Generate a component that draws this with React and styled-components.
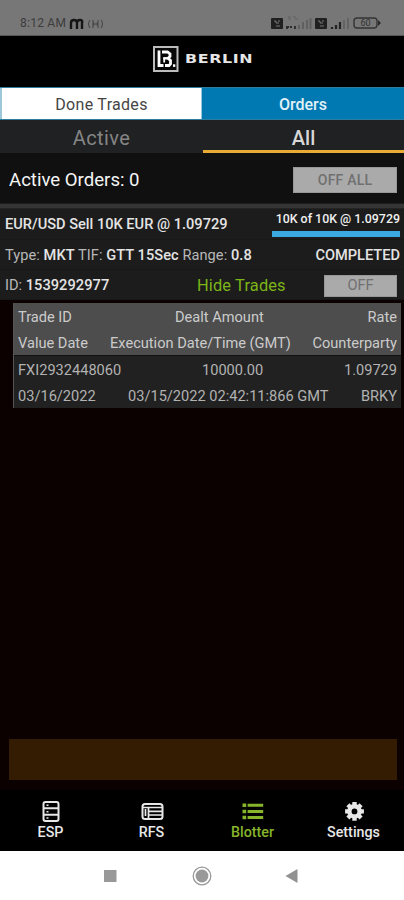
import React from "react";
import styled, { createGlobalStyle } from "styled-components";

const GlobalStyle = createGlobalStyle`
  * { box-sizing: border-box; }
  body { margin: 0; background: #0a0100; font-family: Roboto, sans-serif; }
`;

const Screen = styled.div`
  width: 404px;
  height: 900px;
  display: flex;
  flex-direction: column;
  overflow: hidden;
  background: #0a0100;
  color: #e4e4e4;
`;

const Label = styled.span`
  font-size: ${(p) => p.$size || 14.6}px;
  font-weight: ${(p) => p.$weight || 400};
  letter-spacing: ${(p) => p.$track || 0}px;
  color: ${(p) => p.$color || "inherit"};
  line-height: 1.2;
  white-space: pre;
`;

const StatusBar = styled.header`
  height: 36px;
  padding: 12px 22px 0 20px;
  display: flex;
  align-items: center;
  background: #777777;
  border-bottom: 1px solid #555;
  color: #3c3c3c;
`;

const StatusIcons = styled.div`
  margin-left: auto;
  display: flex;
  height: 15px;
`;

const Brand = styled.div`
  height: 51px;
  padding: 2px 0 8px 152px;
  display: flex;
  align-items: center;
  gap: 5px;
  background: #000;
  color: #e6e6e6;
`;

const BrandName = styled.span`
  font: 700 13px/14px "DejaVu Sans", sans-serif;
  letter-spacing: 0.5px;
  transform: scaleX(1.22);
  transform-origin: left center;
`;

const MainTabs = styled.div`
  height: 33px;
  display: grid;
  grid-template-columns: 202px 202px;
  background: #0078b1;
  border: solid #2c7ea0;
  border-width: 1px 0;
`;

const MainTab = styled.div`
  display: flex;
  align-items: center;
  justify-content: center;
  padding-top: 3px;
  background: ${(p) => (p.$selected ? "#fff" : "#0078b1")};
  color: ${(p) => (p.$selected ? "#454545" : "#e3f1f8")};
  border: solid #9cc7da;
  border-width: ${(p) => (p.$selected ? "0 1px 0 2px" : "0")};
`;

const SubTabs = styled.div`
  height: 33px;
  display: grid;
  grid-template-columns: 203px 201px;
  background: #202122;
`;

const SubTab = styled.div`
  display: flex;
  justify-content: center;
  padding-top: 6px;
  color: ${(p) => (p.$selected ? "#d8d8d8" : "#858585")};
  border-bottom: 3px solid ${(p) => (p.$selected ? "#e9ab34" : "transparent")};
`;

const Summary = styled.section`
  height: 50px;
  padding: 3px 7px 0 9px;
  display: flex;
  justify-content: space-between;
  align-items: center;
  background: #101010;
`;

const SummaryTitle = styled.div`
  padding-top: 2px;
`;

const OffButton = styled.button`
  width: ${(p) => p.$width}px;
  height: ${(p) => p.$height}px;
  padding: 1px 0 0;
  display: flex;
  align-items: center;
  justify-content: center;
  background: #aaaaaa;
  border: 1px solid #989898;
  color: #707070;
  font-family: inherit;
`;

const Separator = styled.div`
  height: 6px;
  background: #353535;
  border-bottom: 1px solid #242424;
  border-top: 1px solid #1c1c1c;
`;

const OrderCard = styled.section`
  height: 91px;
  background: #1c1c1c;
  display: grid;
  grid-template-rows: 31px 30px 30px;
`;

const OrderRow = styled.div`
  display: flex;
  justify-content: space-between;
  align-items: center;
  padding: 2px ${(p) => p.$right || 4}px 0 5px;
  border-bottom: 1px solid #181818;
`;

const Fill = styled.div`
  width: 128px;
  align-self: stretch;
  display: flex;
  flex-direction: column;
  align-items: flex-end;
  gap: 4px;
  padding-top: 1px;
`;

const FillBar = styled.div`
  width: 128px;
  height: 6px;
  background: #3ba9e0;
`;

const IdRow = styled(OrderRow)`
  display: grid;
  grid-template-columns: 192px 1fr 73px;
`;

const Trades = styled.section`
  margin: 3px 3px 0 13px;
  height: 105px;
  border-left: 1px solid #555;
`;

const TradeGroup = styled.div`
  height: ${(p) => (p.$head ? 53 : 52)}px;
  display: grid;
  grid-template-rows: 26px 26px;
  background: ${(p) => (p.$head ? "#4d4d4d" : "#212121")};
  color: ${(p) => (p.$head ? "#cbcbcb" : "#b2b2b2")};
  border-bottom: ${(p) => (p.$head ? "1px solid #111" : "0")};
`;

const TradeRow = styled.div`
  display: grid;
  grid-template-columns: ${(p) => p.$columns};
  align-items: center;
  padding: 4px 4px 0;
  & > :last-child { text-align: right; }
`;

const Banner = styled.div`
  margin: auto 7px 10px 9px;
  height: 41px;
  background: #341c02;
`;

const BottomNav = styled.nav`
  height: 61px;
  display: grid;
  grid-template-columns: repeat(4, 101px);
  background: #000;
`;

const NavItem = styled.div`
  display: flex;
  flex-direction: column;
  align-items: center;
  padding-top: 10px;
  gap: 1px;
  color: ${(p) => (p.$active ? "#86b52b" : "#e8e8e8")};
`;

const SystemNav = styled.footer`
  height: 49px;
  display: flex;
  background: #fff;
`;

const StatusGlyphs = () => (
  <svg width="112" height="15" viewBox="0 0 112 15">
    <rect x="1" y="2" width="12" height="11" rx="1" fill="#202020" />
    <path d="M4 5h2v2h3M6 10h4M8 5h2" stroke="#777" fill="none" />
    <path d="M18 1h3M23 1h3M18 3h3M25 3h3" stroke="#606060" />
    <path d="M17 13v-2h2M20 11h2M25 13v-3" stroke="#2b2b2b" fill="none" strokeWidth="1.8" />
    <path d="M29 13V9M33 13V6M37 13V4M40.5 13V2" stroke="#606060" strokeWidth="2" />
    <rect x="45" y="2" width="12" height="11" rx="1" fill="#202020" />
    <path d="M48 5h2v2h3M50 10h4M52 5h2" stroke="#777" fill="none" />
    <path d="M62 13v-2M66 13V9M70 13V6" stroke="#242424" strokeWidth="2.2" />
    <path d="M74 13V4M78 13V2" stroke="#636363" strokeWidth="2" />
    <rect x="84" y="2" width="23" height="10" rx="3" fill="none" stroke="#353535" strokeWidth="1.4" />
    <path d="M108 4l3 3-3 3z" fill="#292929" />
    <text x="95.5" y="10.3" textAnchor="middle" fontFamily="Roboto" fontSize="9" fill="#303030">60</text>
  </svg>
);

const MGlyph = () => (
  <svg width="38" height="14" viewBox="0 0 38 14">
    <path d="M5 12V6q0-3 3-3t3 3v6M11 6q0-3 3-3t2 3v6" fill="none" stroke="#151515" strokeWidth="2.4" />
    <path d="M24 3q-3 4 0 8M35 3q3 4 0 8M27 3v8M32 3v8M27 5q2 2 0 4M32 5q-2 2 0 4M27 7h5" fill="none" stroke="#484848" strokeWidth="1.1" />
  </svg>
);

const BrandMark = () => (
  <svg width="28" height="28" viewBox="0 0 28 28" fill="none">
    <rect x="2" y="2" width="23.5" height="24" fill="#080808" stroke="#bcbcbc" strokeWidth="2" />
    <path d="M7 5.5V20.500h4.500" stroke="#fff" strokeWidth="2.8" />
    <path d="M10 7H15.500L18 9V11.500L16 13.300L18.500 15.500V19L17 20.500H13" stroke="#fff" strokeWidth="2.8" />
    <path d="M11.300 13.300H16" stroke="#fff" strokeWidth="2.4" />
    <path d="M12.200 12.500V17.500" stroke="#fff" strokeWidth="1.800" />
    <rect x="21" y="19.3" width="2.3" height="2.6" fill="#fff" />
  </svg>
);

const icons = {
  ESP: (
    <>
      <rect x="4.5" y="2" width="15" height="19" rx="2" />
      <path d="M4.500 8.300h15M4.500 14.800h15" />
      <path d="M7.500 5.300h2M7.500 11.700h2M7.500 18h2" strokeWidth="1.5" />
    </>
  ),
  RFS: (
    <>
      <rect x="2.5" y="4" width="20" height="15" rx="2.5" />
      <path d="M3 7.500h19M8.500 7v12M8.500 11.300h14M8.500 15h14M5.500 9v7" strokeWidth="1.7" />
    </>
  ),
  Blotter: (
    <>
      <path d="M1.5 5.3h3.7M1.5 11.5h3.7M1.5 17.5h3.7" strokeWidth="3.5" />
      <path d="M6.6 5.3h15.6M6.6 11.5h15.6M6.6 17.5h15.6" strokeWidth="3" />
    </>
  ),
  Settings: (
    <>
      <circle cx="12.5" cy="11.4" r="5.1" strokeWidth="4.4" />
      <path d="M12.500 2v3M12.500 17.800v3M3.100 11.400h3M18.900 11.400h3M5.900 4.800l2.200 2.200M16.900 15.800l2.200 2.200M5.900 18l2.200-2.200M16.900 7l2.200-2.200" strokeWidth="4.4" />
    </>
  ),
};

const NavIcon = ({ name }) => (
  <svg width="24" height="23" viewBox="0 0 24 23" fill="none" stroke="currentColor" strokeWidth="2">
    {icons[name]}
  </svg>
);

const SystemGlyphs = () => (
  <svg width="404" height="49" viewBox="0 0 404 49">
    <rect x="104" y="19" width="12.5" height="12" fill="#999" />
    <circle cx="202" cy="25" r="8.8" fill="none" stroke="#999" strokeWidth="1.3" />
    <circle cx="202" cy="25" r="6.4" fill="#999" />
    <path d="M285.5 25l12-7v14z" fill="#929292" />
  </svg>
);

const Value = ({ children }) => <Label $weight={500} $track={0.06} $color="#e4e4e4">{children}</Label>;

export default function App() {
  return (
    <Screen>
      <GlobalStyle />
      <StatusBar>
        <Label $size={12} $track={0.25}>8:12 AM</Label>
        <MGlyph />
        <StatusIcons><StatusGlyphs /></StatusIcons>
      </StatusBar>
      <Brand><BrandMark /><BrandName>BERLIN</BrandName></Brand>
      <MainTabs>
        <MainTab $selected><Label $size={16} $track={0.3}>Done Trades</Label></MainTab>
        <MainTab><Label $size={16} $weight={500}>Orders</Label></MainTab>
      </MainTabs>
      <SubTabs>
        <SubTab><Label $size={20} $track={0.4}>Active</Label></SubTab>
        <SubTab $selected><Label $size={20} $weight={500}>All</Label></SubTab>
      </SubTabs>
      <Summary>
        <SummaryTitle><Label $size={18.6} $color="#f5f5f5">Active Orders: 0</Label></SummaryTitle>
        <OffButton $width={104} $height={26}><Label $size={14} $weight={500} $track={0.2}>OFF ALL</Label></OffButton>
      </Summary>
      <Separator />
      <OrderCard>
        <OrderRow>
          <Label $weight={500}>EUR/USD Sell 10K EUR @ 1.09729</Label>
          <Fill>
            <Label $size={12.4} $weight={500} $color="#f0f0f0">10K of 10K @ 1.09729</Label>
            <FillBar />
          </Fill>
        </OrderRow>
        <OrderRow>
          <Label $color="#b8b8b8" $track={0.06}>
            Type: <Value>MKT</Value> TIF: <Value>GTT 15Sec</Value> Range: <Value>0.8</Value>
          </Label>
          <Label $weight={500}>COMPLETED</Label>
        </OrderRow>
        <IdRow $right={7}>
          <Label $color="#b8b8b8">ID: <Value>1539292977</Value></Label>
          <Label $size={16.4} $color="#7cb518" $track={0.15}>Hide Trades</Label>
          <OffButton $width={73} $height={22}><Label $size={14.6}>OFF</Label></OffButton>
        </IdRow>
      </OrderCard>
      <Trades>
        <TradeGroup $head>
          <TradeRow $columns="157px 1fr auto"><Label>Trade ID</Label><Label>Dealt Amount</Label><Label>Rate</Label></TradeRow>
          <TradeRow $columns="92px 1fr auto"><Label>Value Date</Label><Label>Execution Date/Time (GMT)</Label><Label>Counterparty</Label></TradeRow>
        </TradeGroup>
        <TradeGroup>
          <TradeRow $columns="184px 1fr auto"><Label>FXI2932448060</Label><Label>10000.00</Label><Label>1.09729</Label></TradeRow>
          <TradeRow $columns="110px 1fr auto"><Label>03/16/2022</Label><Label>03/15/2022 02:42:11:866 GMT</Label><Label>BRKY</Label></TradeRow>
        </TradeGroup>
      </Trades>
      <Banner />
      <BottomNav>
        {["ESP", "RFS", "Blotter", "Settings"].map((name) => (
          <NavItem key={name} $active={name === "Blotter"}>
            <NavIcon name={name} />
            <Label $size={14.3} $weight={500}>{name}</Label>
          </NavItem>
        ))}
      </BottomNav>
      <SystemNav><SystemGlyphs /></SystemNav>
    </Screen>
  );
}
